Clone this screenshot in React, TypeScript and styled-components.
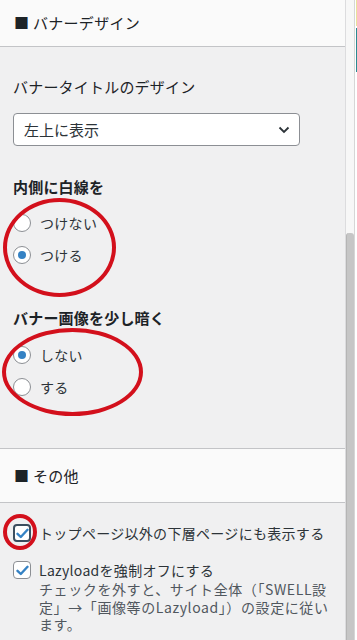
import React from "react";
import styled, { createGlobalStyle } from "styled-components";

const GlobalStyle = createGlobalStyle`
  body {
    margin: 0;
    font-family: "Noto Sans CJK JP", "Noto Sans", sans-serif;
    color: #2c3338;
  }
`;

const Page = styled.div`
  display: flex;
  width: 357px;
  height: 640px;
  overflow: hidden;
  background: #ffffff;
`;

const Panel = styled.div`
  position: relative;
  width: 346px;
  flex-shrink: 0;
  display: flex;
  flex-direction: column;
  background: #f0f0f1;
  border-right: 1px solid #dcdcde;
  box-sizing: border-box;
`;

const SectionHeader = styled.div<{ $h: number; $top?: boolean }>`
  height: ${(p) => p.$h}px;
  box-sizing: border-box;
  display: flex;
  align-items: center;
  padding-left: 14px;
  background: #fafafa;
  border-bottom: 1px solid #c3c4c7;
  border-top: ${(p) => (p.$top ? "1px solid #c3c4c7" : "none")};
  font-size: 15px;
  line-height: 20px;
  color: #1d2327;
  letter-spacing: 0.3px;
`;

const Section = styled.div<{ $pt: number; $pb: number }>`
  display: flex;
  flex-direction: column;
  padding: ${(p) => p.$pt}px 13px ${(p) => p.$pb}px 13px;
`;

const Title = styled.div<{ $bold?: boolean; $mt?: number }>`
  font-size: 15px;
  line-height: 20px;
  font-weight: ${(p) => (p.$bold ? 700 : 400)};
  color: #1d2327;
  margin-top: ${(p) => p.$mt ?? 0}px;
  letter-spacing: 0.2px;
`;

const Select = styled.div`
  margin-top: 16px;
  width: 287px;
  height: 33px;
  box-sizing: border-box;
  border: 1px solid #8c8f94;
  border-radius: 4px;
  background: #fff;
  display: flex;
  align-items: center;
  justify-content: space-between;
  padding: 0 9px 0 10px;
  font-size: 15px;
  color: #2c3338;
`;

const RadioGroup = styled.div<{ $mt: number }>`
  display: flex;
  flex-direction: column;
  gap: 8px;
  margin-top: ${(p) => p.$mt}px;
`;

const OptionRow = styled.div`
  display: flex;
  align-items: center;
  gap: 9px;
  height: 24px;
  font-size: 14px;
  color: #2c3338;
  letter-spacing: 0.3px;
`;

const RadioCircle = styled.span<{ $checked?: boolean }>`
  width: 18px;
  height: 18px;
  box-sizing: border-box;
  border-radius: 50%;
  border: 1px solid #8c8f94;
  background: #fff;
  display: flex;
  align-items: center;
  justify-content: center;
  flex-shrink: 0;
  &::after {
    content: "";
    width: 8px;
    height: 8px;
    border-radius: 50%;
    background: ${(p) => (p.$checked ? "#3582c4" : "transparent")};
  }
`;

const CheckBox = styled.span<{ $focus?: boolean }>`
  width: 18px;
  height: 18px;
  box-sizing: border-box;
  border-radius: 4px;
  border: ${(p) => (p.$focus ? "2px solid #3c4e5e" : "1px solid #8c8f94")};
  background: #fff;
  display: flex;
  align-items: center;
  justify-content: center;
  flex-shrink: 0;
`;

const CheckRow = styled.div<{ $mt: number }>`
  display: flex;
  align-items: flex-start;
  gap: 8px;
  margin-top: ${(p) => p.$mt}px;
`;

const CheckText = styled.div`
  display: flex;
  flex-direction: column;
  font-size: 14px;
  color: #2c3338;
`;

const Label = styled.span`
  line-height: 18px;
  letter-spacing: 0.3px;
`;

const Desc = styled.div`
  font-size: 14px;
  line-height: 17.5px;
  color: #50575e;
  margin-top: 2px;
  letter-spacing: 0.6px;
`;

const Mark = styled.div<{ $l: number; $t: number; $w: number; $h: number }>`
  position: absolute;
  left: ${(p) => p.$l}px;
  top: ${(p) => p.$t}px;
  width: ${(p) => p.$w}px;
  height: ${(p) => p.$h}px;
  box-sizing: border-box;
  border: 4px solid #d3101c;
  border-radius: 50%;
  pointer-events: none;
`;

const Gutter = styled.div`
  display: flex;
  flex: 1;
`;

const Track = styled.div`
  width: 8px;
  display: flex;
  flex-direction: column;
  background: #f7f7f7;
`;

const Thumb = styled.div`
  margin-top: 233px;
  flex: 1;
  background: #c6c6c6;
  border-radius: 3px 3px 0 0;
  border-left: 1px solid #b5b5b5;
`;

const Edge = styled.div`
  flex: 1;
  display: flex;
  flex-direction: column;
  border-left: 1px solid #d6d6d6;
  background: #fff;
`;

const EdgeBit = styled.div<{ $c: string; $h: number; $mt?: number }>`
  height: ${(p) => p.$h}px;
  margin-top: ${(p) => p.$mt ?? 0}px;
  margin-left: 1px;
  background: ${(p) => p.$c};
`;

const Check = () => (
  <svg width="13" height="11" viewBox="0 0 13 11">
    <path d="M1.5 5.8 L4.8 9 L11.5 1.8" fill="none" stroke="#3582c4" strokeWidth="2.4" strokeLinecap="round" strokeLinejoin="round" />
  </svg>
);

const Chevron = () => (
  <svg width="12" height="8" viewBox="0 0 12 8">
    <path d="M1.5 1.5 L6 6 L10.5 1.5" fill="none" stroke="#2c3338" strokeWidth="1.8" />
  </svg>
);

export default function App() {
  return (
    <>
      <GlobalStyle />
      <Page>
        <Panel>
          <SectionHeader $h={47}>■ バナーデザイン</SectionHeader>
          <Section $pt={30} $pb={49}>
            <Title>バナータイトルのデザイン</Title>
            <Select>
              <span>左上に表示</span>
              <Chevron />
            </Select>
            <Title $bold $mt={31}>内側に白線を</Title>
            <RadioGroup $mt={14}>
              <OptionRow>
                <RadioCircle />
                つけない
              </OptionRow>
              <OptionRow>
                <RadioCircle $checked />
                つける
              </OptionRow>
            </RadioGroup>
            <Title $bold $mt={41}>バナー画像を少し暗く</Title>
            <RadioGroup $mt={15}>
              <OptionRow>
                <RadioCircle $checked />
                しない
              </OptionRow>
              <OptionRow>
                <RadioCircle />
                する
              </OptionRow>
            </RadioGroup>
          </Section>
          <SectionHeader $h={55} $top>■ その他</SectionHeader>
          <Section $pt={21} $pb={0}>
            <CheckRow $mt={0}>
              <CheckBox $focus>
                <Check />
              </CheckBox>
              <CheckText>
                <Label>トップページ以外の下層ページにも表示する</Label>
              </CheckText>
            </CheckRow>
            <CheckRow $mt={19}>
              <CheckBox>
                <Check />
              </CheckBox>
              <CheckText>
                <Label>Lazyloadを強制オフにする</Label>
                <Desc>
                  チェックを外すと、サイト全体（「SWELL設定」→「画像等のLazyload」）の設定に従います。
                </Desc>
              </CheckText>
            </CheckRow>
          </Section>
          <Mark $l={3} $t={198} $w={113} $h={99} />
          <Mark $l={2} $t={328} $w={141} $h={88} />
          <Mark $l={3} $t={514} $w={34} $h={36} />
        </Panel>
        <Gutter>
          <Track>
            <Thumb />
          </Track>
          <Edge>
            <EdgeBit $c="#e8e29a" $h={26} />
            <EdgeBit $c="#2b8b92" $h={44} $mt={2} />
          </Edge>
        </Gutter>
      </Page>
    </>
  );
}
